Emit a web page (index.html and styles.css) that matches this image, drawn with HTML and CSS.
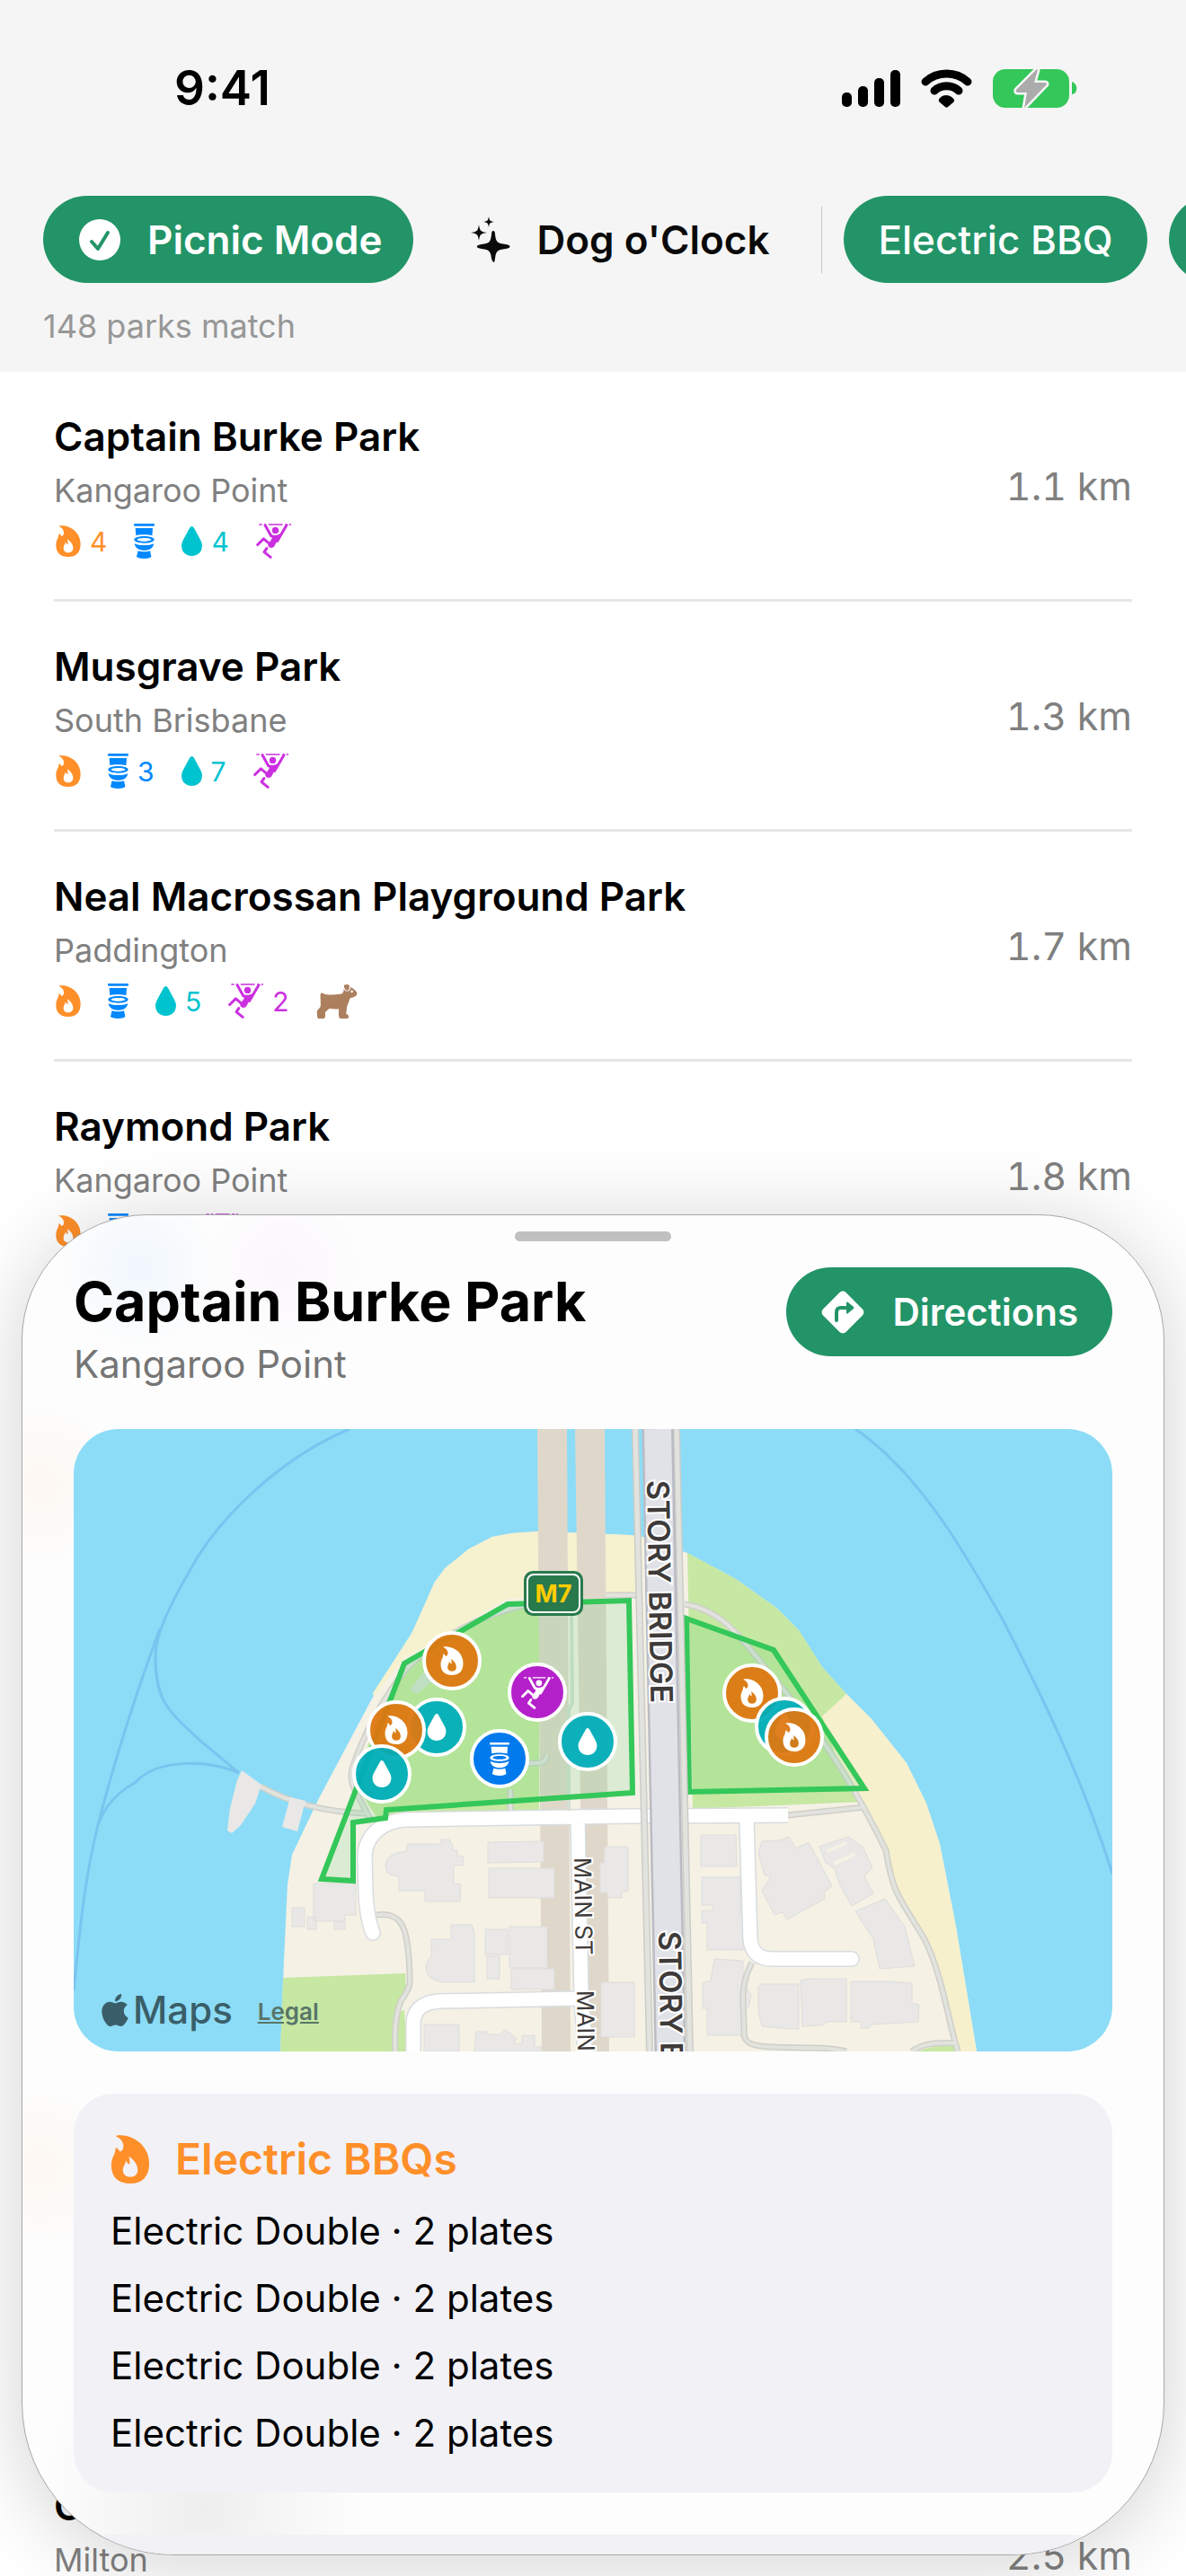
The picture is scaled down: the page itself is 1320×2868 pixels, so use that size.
FILE: index.html
```
<!DOCTYPE html>
<html lang="en">
<head>
    <meta charset="UTF-8">
    <meta name="viewport" content="width=device-width, initial-scale=1.0">
    <title>Parks</title>
    <link rel="stylesheet" href="styles.css">
</head>
<body>

<!-- shared icons -->
<svg class="sprite" aria-hidden="true">
    <symbol id="flame" viewBox="0 0 82 105">
        <path fill-rule="evenodd" d="M12 1C45-3 82 22 82 62c0 28-16 43-41 43C16 105 0 92 0 66c0-18 9-24 9-36 0-3 2-3 4-1l6 7c5-2 8-7 7-14C25 14 21 9 12 4c-2-1-2-3 0-3ZM38 46c1 7 3 14 1 17-3 1-5-3-7-8-1 7-7 13-7 21 0 9 6 15 16 15 9 0 16-5 16-15S52 56 38 46Z"/>
    </symbol>
    <symbol id="toilet" viewBox="0 0 70 118">
        <rect width="70" height="8" rx="3"/>
        <path d="M5 15h59l-2 25C50 36 20 36 7 39Z"/>
        <path fill-rule="evenodd" d="M35 42c20 0 34 5 34 12s-14 12-34 12S1 61 1 54s14-12 34-12Zm0 6c-14 0-24 3-24 6s10 6 24 6 24-3 24-6-10-6-24-6Z"/>
        <path d="M2 67c18 8 48 8 66 0-2 11-10 19-18 21-8 3-22 3-30 0C10 84 4 78 2 67ZM14 92c14 4 28 4 41 0l4 20c-9 8-39 8-50 0Z"/>
    </symbol>
    <symbol id="drop" viewBox="0 0 68 98">
        <path d="M34 0c3 0 6 3 8 7l18 33c5 9 8 16 8 24 0 22-16 34-34 34S0 86 0 64c0-8 3-15 8-24L26 7c2-4 5-7 8-7Z"/>
    </symbol>
    <symbol id="climber" viewBox="0 0 116 116">
        <path fill="none" stroke="currentColor" stroke-width="4" d="M10 3h10M41 3h47M96 3h6M109 3h7"/>
        <path fill="none" stroke="currentColor" stroke-width="9" stroke-linecap="round" stroke-linejoin="round" d="m30 5 20 36M101 5 70 58M46 68 25 50 5 70M35 82l-8 12 21 17"/>
        <circle cx="64" cy="22" r="11"/>
        <path d="M46 34c8 6 26 6 36-2L62 72c-4 8-12 10-18 6-6-4-6-8-1-14l10-16Z"/>
    </symbol>
    <symbol id="dog" viewBox="0 0 132 112">
        <path fill-rule="evenodd" d="M12 37c-2-8 6-12 11-6 10 5 38 3 53 1 8-1 13-6 12-15l1-2c5 13 21 10 22-6l8 4 12 12c3 9-3 17-21 19-5 11-8 20-11 29l-3 24c10 1 11 15 3 15H76c-7-9-3-20-4-32-8 2-20 0-30-1-6 6-13 8-15 15 2 8 2 18-7 18H4c-5-8-1-14-4-22 3-10 9-10 12-18 2-13-1-25 0-35ZM115 19a4 4 0 1 0 0 8 4 4 0 1 0 0-8Z"/>
        <path d="M90 2c6-3 12-2 16 0 3 8 0 15-6 19-7-1-13-12-10-19Z"/>
    </symbol>
    <symbol id="apple" viewBox="0 0 24 24">
        <path d="M12.152 6.896c-.948 0-2.415-1.078-3.96-1.04-2.04.027-3.91 1.183-4.961 3.014-2.117 3.675-.546 9.103 1.519 12.09 1.013 1.454 2.208 3.09 3.792 3.039 1.52-.065 2.09-.987 3.935-.987 1.831 0 2.35.987 3.96.948 1.637-.026 2.676-1.48 3.676-2.948 1.156-1.688 1.636-3.325 1.662-3.415-.039-.013-3.182-1.221-3.22-4.857-.026-3.04 2.48-4.494 2.597-4.559-1.429-2.09-3.623-2.324-4.39-2.376-2-.156-3.675 1.09-4.61 1.09zM15.53 3.83c.843-1.012 1.4-2.427 1.245-3.83-1.207.052-2.662.805-3.532 1.818-.78.896-1.454 2.338-1.273 3.714 1.338.104 2.715-.688 3.559-1.701"/>
    </symbol>
    <symbol id="pin-flame" viewBox="0 0 68 68">
        <circle cx="34" cy="34" r="31" fill="#de7710" fill-opacity=".94" stroke="#fff" stroke-width="4"/>
        <use href="#flame" x="21" y="18" width="26" height="32" fill="#fff"/>
    </symbol>
    <symbol id="pin-drop" viewBox="0 0 68 68">
        <circle cx="34" cy="34" r="31" fill="#00adba" fill-opacity=".94" stroke="#fff" stroke-width="4"/>
        <use href="#drop" x="23" y="19" width="22" height="30" fill="#fff"/>
    </symbol>
    <symbol id="pin-toilet" viewBox="0 0 68 68">
        <circle cx="34" cy="34" r="31" fill="#007aec" stroke="#fff" stroke-width="4"/>
        <use href="#toilet" x="23" y="16" width="22" height="37" fill="#fff"/>
    </symbol>
    <symbol id="pin-climber" viewBox="0 0 68 68">
        <circle cx="34" cy="34" r="31" fill="#b421ca" stroke="#fff" stroke-width="4"/>
        <use href="#climber" x="16" y="17" width="36" height="36" fill="#fff" color="#fff"/>
    </symbol>
</svg>

<div class="app">
    <header class="topbar">
        <div class="status">
            <span class="clock">9:41</span>
            <div class="status-icons">
                <svg width="65" height="43" viewBox="0 0 65 43">
                    <rect y="26" width="11" height="16" rx="5"/>
                    <rect x="18" y="19" width="11" height="23" rx="5"/>
                    <rect x="36" y="10" width="11" height="32" rx="5"/>
                    <rect x="54" y="1" width="11" height="41" rx="5"/>
                </svg>
                <svg width="57" height="43" viewBox="0 0 57 43">
                    <path fill="none" stroke="#000" stroke-width="9" stroke-linecap="round" d="M5 14c13-12 34-12 47 0M15 24c7-7 20-7 27 0"/>
                    <path d="M21 37c-4-3 2-8 7-8s12 5 8 8l-6 5c-1 1-2 1-3 0Z"/>
                </svg>
                <svg width="94" height="45" viewBox="0 0 94 45">
                    <rect y="1" width="85" height="43" rx="14" fill="#34c759"/>
                    <path d="M88 15c7 2 7 13 0 14Z" fill="#34c759"/>
                    <path d="M49 1 26 24q-1 3 2 3h10l-3 17 25-26q0-2-2-2H46l4-14Z" fill="#ababab" stroke="#f5f5f5" stroke-width="5" stroke-linejoin="round" paint-order="stroke"/>
                </svg>
            </div>
        </div>
        <nav class="chips">
            <button class="chip on strong">
                <svg width="46" height="46" viewBox="0 0 46 46">
                    <circle cx="23" cy="23" r="23" fill="#fff"/>
                    <path d="m14 25 7 8 11-18" fill="none" stroke="#229467" stroke-width="4" stroke-linecap="round" stroke-linejoin="round"/>
                </svg>
                Picnic Mode
            </button>
            <button class="chip strong">
                <svg width="44" height="53" viewBox="0 0 44 53">
                    <path d="M25 17q2 0 2 4c1 8 2 10 12 11 6 1 6 4 0 5-10 1-11 3-12 11q-1 8-4 0c-1-8-2-10-11-11-7-1-7-4 0-5 9-1 10-3 11-11q0-4 2-4Z"/>
                    <path d="M9 10c1 7 2 8 9 9-7 1-8 2-9 9-1-7-2-8-9-9 7-1 8-2 9-9ZM20 1c1 5 1 5 6 6-5 1-5 1-6 6-1-5-1-5-6-6 5-1 5-1 6-6Z"/>
                </svg>
                Dog o'Clock
            </button>
            <span class="chip-divider"></span>
            <button class="chip on">Electric BBQ</button>
            <button class="chip on more" aria-label="More filters"></button>
        </nav>
        <p class="match-count">148 parks match</p>
    </header>

    <ul class="parks">
        <li class="park">
            <div class="park-info">
                <h2>Captain Burke Park</h2>
                <p class="suburb">Kangaroo Point</p>
                <div class="facilities">
                    <span class="bbq"><svg><use href="#flame"/></svg>4</span>
                    <span class="toilet"><svg><use href="#toilet"/></svg></span>
                    <span class="water"><svg><use href="#drop"/></svg>4</span>
                    <span class="play"><svg><use href="#climber"/></svg></span>
                </div>
            </div>
            <span class="distance">1.1 km</span>
        </li>
        <li class="park">
            <div class="park-info">
                <h2>Musgrave Park</h2>
                <p class="suburb">South Brisbane</p>
                <div class="facilities">
                    <span class="bbq"><svg><use href="#flame"/></svg></span>
                    <span class="toilet"><svg><use href="#toilet"/></svg>3</span>
                    <span class="water"><svg><use href="#drop"/></svg>7</span>
                    <span class="play"><svg><use href="#climber"/></svg></span>
                </div>
            </div>
            <span class="distance">1.3 km</span>
        </li>
        <li class="park">
            <div class="park-info">
                <h2>Neal Macrossan Playground Park</h2>
                <p class="suburb">Paddington</p>
                <div class="facilities">
                    <span class="bbq"><svg><use href="#flame"/></svg></span>
                    <span class="toilet"><svg><use href="#toilet"/></svg></span>
                    <span class="water"><svg><use href="#drop"/></svg>5</span>
                    <span class="play"><svg><use href="#climber"/></svg>2</span>
                    <span class="dog"><svg><use href="#dog"/></svg></span>
                </div>
            </div>
            <span class="distance">1.7 km</span>
        </li>
        <li class="park">
            <div class="park-info">
                <h2>Raymond Park</h2>
                <p class="suburb">Kangaroo Point</p>
                <div class="facilities">
                    <span class="bbq"><svg><use href="#flame"/></svg></span>
                    <span class="toilet"><svg><use href="#toilet"/></svg></span>
                    <span class="water"><svg><use href="#drop"/></svg></span>
                    <span class="play"><svg><use href="#climber"/></svg></span>
                    <span class="dog"><svg><use href="#dog"/></svg></span>
                </div>
            </div>
            <span class="distance">1.8 km</span>
        </li>
        <!-- rows under the sheet -->
        <li class="park"></li>
        <li class="park"></li>
        <li class="park"></li>
        <li class="park"></li>
        <li class="park"></li>
        <li class="park">
            <div class="park-info">
                <h2>Gregory Park</h2>
                <p class="suburb">Milton</p>
                <div class="facilities">
                    <span class="bbq"><svg><use href="#flame"/></svg></span>
                </div>
            </div>
            <span class="distance">2.5 km</span>
        </li>
    </ul>

    <section class="sheet">
        <div class="grabber"></div>
        <div class="sheet-header">
            <div>
                <h1>Captain Burke Park</h1>
                <p class="sheet-suburb">Kangaroo Point</p>
            </div>
            <button class="directions">
                <svg width="50" height="50" viewBox="0 0 50 50">
                    <rect x="7" y="7" width="36" height="36" rx="5" transform="rotate(45 25 25)" fill="#fff"/>
                    <path d="M18 34V25q0-5 5-5h8" fill="none" stroke="#229467" stroke-width="4" stroke-linecap="round"/>
                    <path d="M29 14q0-1 2 0l6 5q1 1 0 2l-6 5q-2 1-2 0Z" fill="#229467"/>
                </svg>
                Directions
            </button>
        </div>

        <div class="map">
            <svg viewBox="0 0 1156 693" preserveAspectRatio="xMidYMid slice" role="img" aria-label="Map of Captain Burke Park">
                <rect width="1156" height="693" fill="#8cdcf7"/>
                <!-- ferry routes -->
                <g fill="none" stroke="#79c4ef" stroke-width="3">
                    <path d="M307 0C230 32 160 100 129 158 105 200 91 230 91 252c0 50 12 60 50 95l43 36"/>
                    <path d="M96 222C60 320 40 390 27 441 10 510 6 570 0 625"/>
                    <path d="M184 383c-30-14-90-18-116 11-22 12-35 30-41 47"/>
                    <path d="M870 0c70 48 120 134 165 214 40 78 86 170 121 281"/>
                </g>
                <!-- land -->
                <path fill="#f5f1e5" d="m230 693 4-101 4-85 5-33 29-61 59-111 46-76 25-56 37-36 27-14 22-4 29-2 101 4 15 2 34 12 16 6 54 29 45 32 25 25 26 41 27 30 28 28 39 49 22 45 15 45 18 92 23 139Z"/>
                <path fill="#f6f1cf" d="m333 294 44-68 25-56 11-15 26-21 27-14 22-4 29-2 101 4 15 2v65h-15l-135 4-115 66-34 44Z"/>
                <path fill="#f6f0cd" d="m860 295 28 28 39 49 22 45 15 45 18 92 23 139h-25l-14-78-19-47-30-56-13-43-24-49-33-59-14-41Z"/>
                <path fill="#c6e8a3" d="m683 138 54 29 45 32 25 25 26 41 27 30-27 25 14 41 31 54-189 8Z"/>
                <path fill="#c6e8a3" d="m498 197 20-1v229l-148 5-31 5-16-25-8-20 29-88 27-40 60-38ZM233 611l136-5 1 20-12 24-2 43H230ZM940 693q20-8 42-6l2 6ZM360 650l8-3 3 46h-11Z"/>
                <!-- bridge footprint -->
                <path fill="#dfd8ca" d="M516 0h33l4 693h-32ZM558 0h33l5 693h-28Z"/>
                <!-- buildings -->
                <g fill="#e9e8e6" stroke="#dedddb">
                    <path d="M371 462h38v-5h9l4 7v5h5v6l7 1-1 10h-10v20l8 1-1 19h-39v-12h-29v-16q-15 0-15-12 0-14 24-16ZM461 460l62-1v23l-62 1ZM462 489h73v33h-73ZM591 465h26v50h-7v7h-16v-6h-8v-33h4ZM267 506h47v35h-12v7h-35ZM243 533h14v21h-14ZM260 543h10v14h-10ZM290 549h12v8h-12Z"/>
                    <path d="M420 552h23l3 8v56h-36q-18-4-18-16 0-8 6-12v-20h22ZM458 557h25v28h-25ZM485 554h42v46h-42ZM460 587h14v25h-14ZM487 601h48v23h-48ZM390 663h39v30h-39ZM448 671h13v3h13l6-5 13 9-3 6h9v-9h14v13h8v5h-75ZM587 616h37v61h-37Z"/>
                    <path d="M698 452h39l1 35h-40ZM699 499h43v41h3v40h-40v-30h-6v-14h12v-6h-12ZM713 590l32 2v24l9 14-2 12-6 8v25h-41v-30h-5v-28l9-3Z"/>
                    <path d="m766 459 20-1 10-4 8 13 14-7 26 49-9 7 1 7-42 23-5-8-9 3-14-27 10-16-7-1-7-25ZM830 465l32-11 16 11 11 23-9 10 10 19-24 14-14-25-5-17-10-6ZM870 537l33-14 22 31 11 44-39 3-7-33Z"/>
                    <path d="M765 618h42v50h-9l-32-3-4-17v-26ZM809 614l9-2h42v48h-22l-5 4-22 1ZM865 615h42l26 2v22l8 2-1 19-52 3-3 4h-9v-7h-11Z"/>
                </g>
                <path d="m838 470 22-9M846 484l24-11" stroke="#f5f1e5" stroke-width="4"/>
                <!-- footpaths -->
                <path fill="none" stroke="#cfcfc8" stroke-width="7" d="M208 398c25 14 60 28 117 30M331 436l-18-34q-6-12-3-24 20-60 61-112c30-30 80-60 140-72M592 185h40M680 195c50 8 70 50 110 95 40 50 70 90 114 179 8 50 14 50 43 99 20 40 26 90 37 125M795 430l85-9M337 541c30-4 36 16 37 70q2 10-10 26-8 20-6 56M755 594c-16 30-8 50-9 78 0 18 20 16 77 17q20 0 37 4M933 693q14-12 49-9M486 401v24M490 372h26q10 0 11-10"/>
                <path fill="none" stroke="#e2e3de" stroke-width="4" d="M208 398c25 14 60 28 117 30M331 436l-18-34q-6-12-3-24 20-60 61-112c30-30 80-60 140-72M592 185h40M680 195c50 8 70 50 110 95 40 50 70 90 114 179 8 50 14 50 43 99 20 40 26 90 37 125M795 430l85-9M337 541c30-4 36 16 37 70q2 10-10 26-8 20-6 56M755 594c-16 30-8 50-9 78 0 18 20 16 77 17q20 0 37 4M933 693q14-12 49-9M486 401v24M490 372h26q10 0 11-10"/>
                <path d="M182 391 187 380l22 16-7 21-16 24-10 9-5-3 3-25ZM241 410l17 4-9 34-17-5Z" fill="#e9e8e6"/>
                <path d="m374 290 16-20 12 9-20 16Z" fill="#d3e3d2"/>
                <!-- streets -->
                <g fill="none" stroke-linejoin="round">
                    <g stroke="#d8dcdf" stroke-width="18">
                        <path stroke-linecap="round" d="M333 561c-10-24-8-60-9-87 2-24 22-38 46-39M749 436l4 132q2 22 25 22h88"/>
                        <path d="M370 435l248-4 177-1M561 436l4 194 4 63M562 634l-155 3q-29 2-29 26v30"/>
                    </g>
                    <g stroke="#fff" stroke-width="15">
                        <path stroke-linecap="round" d="M333 561c-10-24-8-60-9-87 2-24 22-38 46-39M749 436l4 132q2 22 25 22h88"/>
                        <path d="M369 435l249-4 177-1M561 432l4 198 4 63M562 634l-155 3q-29 2-29 26v30"/>
                    </g>
                    <path d="m554 200 1 105-4 8v112" stroke="#d3dfd0" stroke-width="4"/>
                </g>
                <!-- park boundary -->
                <g fill="#34c759" fill-opacity=".13" stroke="#34c759" stroke-width="6">
                    <path d="m483 195 135-4 4 214-274 19-1 9-36 5v65l-35-2 92-240Z"/>
                    <path d="m682 211 97 35 101 154-195 4Z"/>
                </g>
                <!-- Story Bridge -->
                <path d="m625 0 16 693M671 0l15 693" stroke="#cccdc8" stroke-width="8"/>
                <path d="m625 0 16 693M671 0l15 693" stroke="#e2e3de" stroke-width="5"/>
                <path d="m650 0 14 693" stroke="#babbc3" stroke-width="35"/>
                <path d="m650 0 14 693" stroke="#e1e2e8" stroke-width="30"/>
                <g class="street-name">
                    <text class="big" transform="translate(638 57) rotate(89)">STORY BRIDGE</text>
                    <text class="big" transform="translate(651 559) rotate(89)">STORY BRIDGE</text>
                    <text transform="translate(557 477) rotate(89)">MAIN ST</text>
                    <text transform="translate(560 625) rotate(89)">MAIN ST</text>
                </g>
                <!-- route shield -->
                <rect x="501" y="158" width="66" height="50" rx="10" fill="#287a4d"/>
                <rect x="505" y="162" width="58" height="42" rx="7" fill="#287a4d" stroke="#fff" stroke-width="2"/>
                <text class="shield" x="534" y="193">M7</text>
                <!-- facility pins, 68px each, centred on the facility -->
                <g class="pins">
                    <use href="#pin-flame" x="387" y="224" width="68" height="68"/>
                    <use href="#pin-drop" x="370" y="298" width="68" height="68"/>
                    <use href="#pin-flame" x="325" y="301" width="68" height="68"/>
                    <use href="#pin-drop" x="309" y="350" width="68" height="68"/>
                    <use href="#pin-climber" x="482" y="259" width="68" height="68"/>
                    <use href="#pin-toilet" x="440" y="333" width="68" height="68"/>
                    <use href="#pin-drop" x="538" y="314" width="68" height="68"/>
                    <use href="#pin-flame" x="721" y="260" width="68" height="68"/>
                    <use href="#pin-drop" x="757" y="297" width="68" height="68"/>
                    <use href="#pin-flame" x="768" y="309" width="68" height="68"/>
                </g>
            </svg>
            <div class="attribution">
                <svg width="36" height="36"><use href="#apple"/></svg>
                <span class="maps">Maps</span>
                <a href="#legal">Legal</a>
            </div>
        </div>

        <div class="card">
            <h3><svg><use href="#flame"/></svg>Electric BBQs</h3>
            <ul>
                <li>Electric Double · 2 plates</li>
                <li>Electric Double · 2 plates</li>
                <li>Electric Double · 2 plates</li>
                <li>Electric Double · 2 plates</li>
            </ul>
        </div>
        <div class="card"></div>
    </section>
</div>

</body>
</html>
```
FILE: styles.css
```
* {
    box-sizing: border-box;
}
body {
    margin: 0;
    font-family: Inter, "Liberation Sans", sans-serif;
    color: #000;
    background: #fff;
}
h1, h2, h3, p, ul {
    margin: 0;
    padding: 0;
}
ul {
    list-style: none;
}
button {
    font: inherit;
    color: inherit;
    border: 0;
    cursor: pointer;
}
svg {
    display: block;
    flex: none;
    fill: currentColor;
}
.sprite {
    position: absolute;
    width: 0;
    height: 0;
}
.app {
    position: relative;
    height: 100vh;
    overflow: hidden;
}

/* top bar */
.topbar {
    height: 414px;
    background: #f5f5f5;
    overflow: hidden;
}
.status {
    display: flex;
    justify-content: space-between;
    align-items: center;
    padding: 66px 121px 0 194px;
    height: 130px;
}
.clock {
    font-size: 53px;
    font-weight: 600;
    line-height: 64px;
}
.status-icons {
    display: flex;
    align-items: center;
    gap: 23px;
}
.chips {
    display: flex;
    align-items: center;
    gap: 24px;
    margin-top: 88px;
    padding-left: 48px;
}
.chip {
    display: flex;
    flex: none;
    align-items: center;
    gap: 30px;
    height: 97px;
    padding: 0 38px;
    border-radius: 49px;
    background: transparent;
    color: #0a0a0a;
    font-size: 44px;
    font-weight: 500;
    white-space: nowrap;
}
.chip.strong {
    padding: 0 34px 0 40px;
    font-weight: 600;
}
.chip.on {
    background: #229467;
    color: #fff;
}
.chip.more {
    width: 240px;
}
.chip-divider {
    flex: none;
    width: 1px;
    height: 74px;
    background: #c4c4c4;
}
.match-count {
    margin: 24px 0 0 48px;
    font-size: 36px;
    line-height: 48px;
    color: #979797;
}

/* list */
.parks {
    padding: 0 60px;
}
.park {
    display: flex;
    justify-content: space-between;
    align-items: center;
    height: 256px;
    border-bottom: 3px solid #e6e6e6;
}
.park-info {
    padding-top: 4px;
}
.park h2 {
    font-size: 44px;
    font-weight: 600;
    line-height: 60px;
}
.suburb {
    font-size: 36px;
    line-height: 60px;
    color: #808080;
}
.facilities {
    display: flex;
    align-items: center;
    gap: 30px;
    height: 54px;
    padding-left: 2px;
    font-size: 30px;
}
.facilities span {
    display: flex;
    align-items: center;
    gap: 10px;
}
.facilities svg {
    width: 23px;
    height: 33px;
}
.facilities .bbq { color: #ff8f29; }
.facilities .bbq svg { width: 28px; height: 35px; }
.facilities .toilet { color: #0088ff; }
.facilities .toilet svg { height: 39px; }
.facilities .water { color: #00c3d0; }
.facilities .play { color: #cb30e0; }
.facilities .play svg { width: 39px; height: 39px; }
.facilities .dog { color: #ac7f5e; }
.facilities .dog svg { width: 46px; height: 38px; }
.distance {
    font-size: 43px;
    font-variant-numeric: tabular-nums;
    color: #808080;
}

/* bottom sheet */
.sheet {
    position: absolute;
    top: 1352px;
    right: 24px;
    bottom: 23px;
    left: 24px;
    overflow: hidden;
    padding: 0 57px;
    border: 1px solid #a8a8a8;
    border-radius: 140px 140px 170px 170px;
    background:
        radial-gradient(circle at 130px 60px, rgba(0, 136, 255, 0.05), transparent 90px),
        radial-gradient(circle at 290px 60px, rgba(203, 48, 224, 0.03), transparent 90px),
        radial-gradient(circle at 20px 300px, rgba(255, 143, 41, 0.05), transparent 90px),
        radial-gradient(circle at 20px 1060px, rgba(255, 143, 41, 0.05), transparent 90px),
        radial-gradient(ellipse at 200px 1440px, rgba(0, 0, 0, 0.06), transparent 180px),
        #fdfdfd;
    box-shadow: 0 10px 90px rgba(0, 0, 0, 0.18);
}
.grabber {
    width: 174px;
    height: 11px;
    margin: 18px auto 29px;
    border-radius: 6px;
    background: #c0c0c0;
}
.sheet-header {
    display: flex;
    justify-content: space-between;
    align-items: flex-start;
}
.sheet h1 {
    font-size: 61px;
    font-weight: 700;
    line-height: 76px;
}
.sheet-suburb {
    margin-top: 4px;
    font-size: 42px;
    line-height: 56px;
    color: #757575;
}
.directions {
    display: flex;
    align-items: center;
    gap: 30px;
    height: 99px;
    padding: 0 38px;
    border-radius: 50px;
    background: #229467;
    color: #fff;
    font-size: 42px;
    font-weight: 600;
}
.map {
    position: relative;
    margin-top: 44px;
    overflow: hidden;
    border-radius: 50px;
}
.map > svg {
    width: 100%;
    height: 693px;
}
.street-name text {
    fill: #3e3b3a;
    font-size: 26px;
    stroke: #fff;
    stroke-width: 4px;
    paint-order: stroke;
}
.street-name .big {
    font-size: 34px;
    font-weight: 600;
}
.shield {
    fill: #ffcc00;
    font-size: 27px;
    font-weight: 700;
    text-anchor: middle;
}
.attribution {
    position: absolute;
    left: 28px;
    bottom: 18px;
    display: flex;
    align-items: center;
    gap: 2px;
    color: #3a5e69;
    line-height: 52px;
}
.maps {
    font-size: 42px;
    font-weight: 500;
}
.attribution a {
    margin-left: 26px;
    padding-top: 4px;
    color: #587568;
    font-size: 26px;
    font-weight: 600;
}
.card {
    min-height: 240px;
    margin-top: 47px;
    padding: 40px 41px 29px;
    border-radius: 44px;
    background: #f2f1f6;
}
.card h3 {
    display: flex;
    align-items: center;
    gap: 28px;
    margin-bottom: 9px;
    color: #ff8f29;
    font-size: 48px;
    font-weight: 600;
    line-height: 66px;
}
.card h3 svg {
    width: 44px;
    height: 54px;
}
.card li {
    font-size: 42px;
    line-height: 75px;
}
```
